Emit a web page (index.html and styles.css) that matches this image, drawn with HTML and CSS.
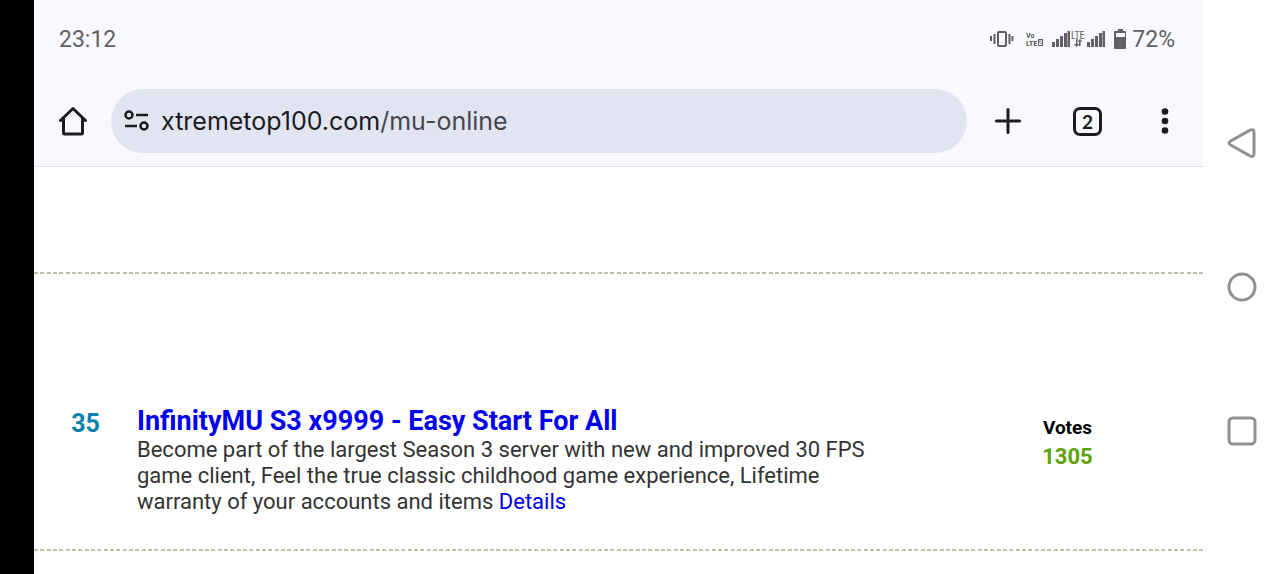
FILE: index.html
```html
<!DOCTYPE html>
<html lang="en">
<head>
    <meta charset="UTF-8">
    <meta name="viewport" content="width=device-width, initial-scale=1.0">
    <title>xtremetop100.com/mu-online</title>
    <link rel="stylesheet" href="styles.css">
</head>
<body>

    <div class="screen">
        <header class="browser">
            <div class="status">
                <span class="clock">23:12</span>
                <div class="indicators">
                    <svg class="signals" width="140" height="24" viewBox="0 0 140 24" fill="#5f5f64">
                        <!-- vibrate -->
                        <rect x="8" y="4" width="8" height="14" rx="1" fill="none" stroke="#5f5f64" stroke-width="2"/>
                        <path d="M0 8h2v5H0zM3.500 6h2v10h-2zM18.500 6h2v10h-2zM21.500 8h2v5h-2z"/>
                        <!-- volte -->
                        <text x="36" y="10" class="tiny">Vo</text>
                        <text x="36" y="18" class="tiny">LTE</text>
                        <path fill-rule="evenodd" d="M48 11h5v7h-5zM49 12.200v1h2v1h-2v2.800h3v-1h-1.700v-.8h1.700v-3z"/>
                        <!-- signal -->
                        <path d="M62 14h3v5h-3zM66 11h3v8h-3zM70 8h3v11h-3zM74 5h3v14h-3zM77.500 3h2.500v16h-2.500z"/>
                        <text x="81" y="11" class="lte">LTE</text>
                        <path d="M86 11h1.500v5h1.800L86.500 19l-2.500-3h2zM89 18v-4.500h-1.500L90 11l2.500 2.500h-2V18z"/>
                        <path d="M97 14h3v5h-3zM101 11h3v8h-3zM105 8h3v11h-3zM109 5h3v14h-3zM112.500 3h2.500v16h-2.500z"/>
                        <!-- battery -->
                        <path fill-rule="evenodd" d="M128 1h5v2h2a1 1 0 0 1 1 1v16a1 1 0 0 1-1 1h-10a1 1 0 0 1-1-1V4a1 1 0 0 1 1-1h3zM126 5v4h9V5z"/>
                    </svg>
                    <span>72%</span>
                </div>
            </div>
            <div class="toolbar">
                <button class="icon home" aria-label="Home">
                    <svg width="30" height="30" viewBox="0 0 30 30" fill="none" stroke="#1b1b21" stroke-width="3" stroke-linejoin="round" stroke-linecap="round"><path d="M2.500 14.500L15 2.500l12.500 12M5.500 12.500V27a1 1 0 0 0 1 1h17a1 1 0 0 0 1-1V12.500"/></svg>
                </button>
                <button class="address">
                    <svg width="26" height="22" viewBox="0 0 26 22" fill="none" stroke="#1b1b21" stroke-width="2.500"><circle cx="5" cy="5" r="3.500"/><path d="M12 5h12M1 16h12"/><circle cx="20" cy="16" r="3.500"/></svg>
                    <span class="url">xtremetop100.com<span class="path">/mu-online</span></span>
                </button>
                <button class="icon" aria-label="New tab">
                    <svg width="30" height="30" viewBox="0 0 30 30" stroke="#1b1b21" stroke-width="3" stroke-linecap="round"><path d="M15 3.500v23M3.500 15h23"/></svg>
                </button>
                <button class="icon tabs" aria-label="Tabs"><span>2</span></button>
                <button class="icon" aria-label="Menu">
                    <svg width="30" height="30" viewBox="0 0 30 30" fill="#1b1b21"><circle cx="15" cy="5.500" r="3.300"/><circle cx="15" cy="15" r="3.300"/><circle cx="15" cy="24.500" r="3.300"/></svg>
                </button>
            </div>
        </header>

        <main>
            <div class="row previous"></div>
            <article class="row">
                <div class="rank">35</div>
                <div class="info">
                    <h2><a href="#">InfinityMU S3 x9999 - Easy Start For All</a></h2>
                    <p>Become part of the largest Season 3 server with new and improved 30 FPS game client, Feel the true classic childhood game experience, Lifetime warranty of your accounts and items <a href="#">Details</a></p>
                </div>
                <div class="votes">
                    <span class="label">Votes</span>
                    <span class="count">1305</span>
                </div>
            </article>
        </main>
    </div>

    <nav class="system">
        <button aria-label="Back">
            <svg width="30" height="32" viewBox="0 0 30 32" fill="none" stroke="#919191" stroke-width="3" stroke-linejoin="round"><path d="M3.300 14.300L23 3.100Q27 1.500 27 5.500v21q0 4-4 2.400L3.300 17.700Q.8 16 3.300 14.300z"/></svg>
        </button>
        <button aria-label="Home screen">
            <svg width="30" height="32" viewBox="0 0 30 32" fill="none" stroke="#919191" stroke-width="3"><circle cx="15" cy="16" r="13"/></svg>
        </button>
        <button aria-label="Recent apps">
            <svg width="30" height="32" viewBox="0 0 30 32" fill="none" stroke="#919191" stroke-width="3"><rect x="2" y="3" width="26" height="26" rx="4"/></svg>
        </button>
    </nav>

</body>
</html>
```
FILE: styles.css
```css
body {
    margin: 0;
    min-height: 100vh;
    display: flex;
    font-family: Roboto, sans-serif;
    background-color: white;
    border-left: 34px solid black;
    box-sizing: border-box;
}
button {
    display: flex;
    align-items: center;
    justify-content: center;
    padding: 0;
    border: none;
    background: none;
    cursor: pointer;
}
a {
    color: #0000ee;
    text-decoration: none;
}
.screen {
    flex: 1;
}
.browser {
    background-color: #f9f8ff;
    border-bottom: 1px solid #dcdeeb;
}
.status {
    display: flex;
    align-items: center;
    justify-content: space-between;
    height: 75px;
    padding: 2px 28px 0 25px;
    font-size: 23px;
    color: #5f5f64;
}
.indicators {
    display: flex;
    align-items: center;
    gap: 2px;
}
.tiny {
    font-family: "Roboto Condensed", "Liberation Sans Narrow", Roboto, sans-serif;
    font-size: 8px;
    font-weight: 700;
}
.lte {
    font-family: "Roboto Condensed", "Liberation Sans Narrow", Roboto, sans-serif;
    font-size: 10px;
}
.toolbar {
    display: flex;
    align-items: center;
    padding: 12px 0 13px;
}
.icon {
    width: 77px;
    height: 64px;
}
.address {
    flex: 1;
    justify-content: flex-start;
    gap: 11px;
    height: 64px;
    padding: 0 13px;
    border-radius: 32px;
    background-color: #e2e4f1;
}
.address + .icon {
    width: 82px;
}
.url {
    font-family: Inter, sans-serif;
    font-size: 25px;
    color: #1b1b21;
}
.path {
    color: #46464f;
}
.tabs span {
    width: 23px;
    height: 23px;
    border: 3px solid #1b1b21;
    border-radius: 7px;
    font: 700 19px/23px Lato, sans-serif;
    color: #1b1b21;
}
.row {
    display: flex;
    padding: 132px 0 36px;
    /* three dashes every 19px */
    background: linear-gradient(90deg, #bfc1af 4px, transparent 4px 6px, #bfc1af 6px 10px, transparent 10px 13px, #bfc1af 13px 17px, transparent 17px) left bottom / 19px 2px repeat-x;
}
.previous {
    height: 107px;
    padding: 0;
}
.rank {
    width: 103px;
    font-size: 25px;
    line-height: 36px;
    font-weight: 700;
    text-align: center;
    color: #0882ab;
}
.info {
    flex: 1;
    padding-right: 40px;
}
.info h2 {
    margin: 0;
    font-size: 27px;
    line-height: 31px;
}
.info p {
    margin: 0;
    font-size: 22px;
    line-height: 26px;
    color: #333333;
}
.votes {
    width: 271px;
    display: flex;
    flex-direction: column;
    align-items: center;
    padding-top: 7px;
    font-weight: 700;
    line-height: 29px;
}
.label {
    font-size: 19px;
}
.count {
    font-size: 22px;
    color: #5fa30c;
}
.system {
    width: 77px;
    display: flex;
    flex-direction: column;
    align-items: center;
    justify-content: center;
    gap: 112px;
}
```
